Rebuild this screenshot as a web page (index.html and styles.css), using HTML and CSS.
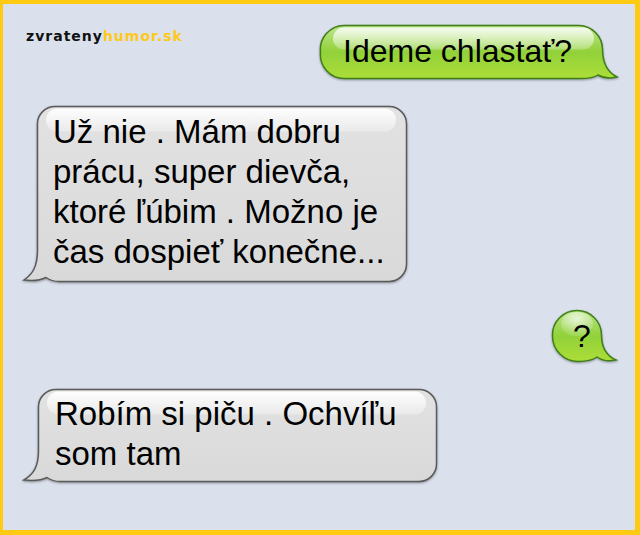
FILE: index.html
```html
<!DOCTYPE html>
<html lang="sk">
<head>
<meta charset="utf-8">
<title>zvratenyhumor.sk</title>
<link rel="stylesheet" href="styles.css">
</head>
<body>
<div class="frame">
  <div class="top">
    <div class="logo"><span class="logo-a">zvrateny</span><span class="logo-b">humor.sk</span></div>
    <div class="bubble green b1">
      <svg class="shape" width="283" height="54" viewBox="0 0 283 54">
        <defs>
          <linearGradient id="gg1" x1="0" y1="0" x2="0" y2="1">
            <stop offset="0" stop-color="#bde68c"/>
            <stop offset="0.5" stop-color="#92d13a"/>
            <stop offset="1" stop-color="#acde38"/>
          </linearGradient>
          <linearGradient id="gl1" x1="0" y1="0" x2="0" y2="1">
            <stop offset="0" stop-color="#ffffff" stop-opacity="0.85"/>
            <stop offset="1" stop-color="#ffffff" stop-opacity="0.25"/>
          </linearGradient>
        </defs>
        <path d="M24,0.5 H259 A24,24 0 0 1 282.5,24 C282.5,38 287,47 297,52 C290,53.5 283,53 278,50 C274,53 268,53.5 260,53.5 H24 A24,24 0 0 1 0.5,27 A24,24 0 0 1 24,0.5 Z" fill="url(#gg1)" stroke="#3f7f17" stroke-width="1.5"/>
        <rect x="13" y="2.5" width="261" height="22" rx="11" fill="url(#gl1)"/>
      </svg>
      <span class="txt">Ideme chlastať?</span>
    </div>
  </div>

  <div class="bubble gray g1">
    <svg class="shape" width="370" height="176" viewBox="0 0 370 176">
      <defs>
        <linearGradient id="gy1" x1="0" y1="0" x2="0" y2="1">
          <stop offset="0" stop-color="#e2e2e2"/>
          <stop offset="1" stop-color="#d9d9d9"/>
        </linearGradient>
        <linearGradient id="gh1" x1="0" y1="0" x2="0" y2="1">
          <stop offset="0" stop-color="#ffffff" stop-opacity="0.95"/>
          <stop offset="1" stop-color="#ffffff" stop-opacity="0.3"/>
        </linearGradient>
      </defs>
      <path d="M18,0.5 H352 A17.5,17.5 0 0 1 369.5,18 V158 A17.5,17.5 0 0 1 352,175.5 H22 C16,175.5 12,173.5 9,171.5 C4,174 -5,175 -13,174 C-4,168 0.5,160 0.5,144 V18 A17.5,17.5 0 0 1 18,0.5 Z" fill="url(#gy1)" stroke="#5a5a5a" stroke-width="1.5"/>
      <rect x="9" y="2.5" width="350" height="23" rx="11.5" fill="url(#gh1)"/>
    </svg>
    <span class="txt">Už nie . Mám dobru<br>prácu, super dievča,<br>ktoré ľúbim . Možno je<br>čas dospieť konečne...</span>
  </div>

  <div class="bubble green q">
    <svg class="shape" width="50" height="52" viewBox="0 0 50 52">
      <defs>
        <linearGradient id="gg2" x1="0" y1="0" x2="0" y2="1">
          <stop offset="0" stop-color="#b9e488"/>
          <stop offset="0.5" stop-color="#92d13a"/>
          <stop offset="1" stop-color="#acde38"/>
        </linearGradient>
        <radialGradient id="gl2" cx="0.5" cy="0.3" r="0.6">
          <stop offset="0" stop-color="#ffffff" stop-opacity="0.7"/>
          <stop offset="1" stop-color="#ffffff" stop-opacity="0.15"/>
        </radialGradient>
      </defs>
      <path d="M25,0.5 A24.5,24.5 0 0 1 49.5,25 C49.5,37 55,46 64,50 C57,51.5 50,50.5 45,47 C40,50.5 33,51.5 26,51.5 A25.5,25.5 0 0 1 0.5,26 A24.5,24.5 0 0 1 25,0.5 Z" fill="url(#gg2)" stroke="#3f7f17" stroke-width="1.5"/>
      <ellipse cx="25" cy="14" rx="16" ry="12" fill="url(#gl2)"/>
    </svg>
    <span class="txt">?</span>
  </div>

  <div class="bubble gray g2">
    <svg class="shape" width="399" height="93" viewBox="0 0 399 93">
      <defs>
        <linearGradient id="gy2" x1="0" y1="0" x2="0" y2="1">
          <stop offset="0" stop-color="#e2e2e2"/>
          <stop offset="1" stop-color="#d9d9d9"/>
        </linearGradient>
        <linearGradient id="gh2" x1="0" y1="0" x2="0" y2="1">
          <stop offset="0" stop-color="#ffffff" stop-opacity="0.95"/>
          <stop offset="1" stop-color="#ffffff" stop-opacity="0.3"/>
        </linearGradient>
      </defs>
      <path d="M18,0.5 H381 A17.5,17.5 0 0 1 398.5,18 V75 A17.5,17.5 0 0 1 381,92.5 H22 C16,92.5 12,90.5 9,88.5 C4,91 -5,92 -14,91 C-4,85 0.5,77 0.5,62 V18 A17.5,17.5 0 0 1 18,0.5 Z" fill="url(#gy2)" stroke="#5a5a5a" stroke-width="1.5"/>
      <rect x="9" y="2.5" width="379" height="23" rx="11.5" fill="url(#gh2)"/>
    </svg>
    <span class="txt">Robím si piču . Ochvíľu<br>som tam</span>
  </div>
</div>
</body>
</html>
```

FILE: styles.css
```css
html, body {
  margin: 0;
  padding: 0;
  background: #dae0ec;
}

.frame {
  box-sizing: border-box;
  width: 640px;
  height: 535px;
  border-style: solid;
  border-color: #ffca12;
  border-width: 4px 5px 5px 3px;
  background: #dae0ec;
  display: flex;
  flex-direction: column;
  overflow: hidden;
}

.top {
  display: flex;
  justify-content: space-between;
  align-items: flex-start;
  padding-top: 21px;
}

.logo {
  margin-left: 23px;
  margin-top: 2px;
  font-family: "DejaVu Sans", Verdana, sans-serif;
  font-weight: 700;
  font-size: 14px;
  line-height: 18px;
  letter-spacing: 1px;
}

.logo-a { color: #111111; }
.logo-b { color: #ffc91a; }

.bubble {
  position: relative;
  box-sizing: border-box;
  font-family: "Liberation Sans", Arial, sans-serif;
  font-size: 32px;
  line-height: 40px;
  color: #000000;
  flex: none;
}

.gray {
  font-size: 33px;
}

.shape {
  position: absolute;
  left: 0;
  top: 0;
  overflow: visible;
  filter: drop-shadow(0 1px 1px rgba(0, 0, 0, 0.35));
}

.txt {
  position: relative;
  display: block;
  white-space: nowrap;
}

.b1 {
  width: 283px;
  height: 54px;
  margin-right: 32px;
  padding: 6px 0 0 23px;
}

.g1 {
  width: 370px;
  height: 176px;
  margin-top: 27px;
  margin-left: 34px;
  padding: 6px 0 0 16px;
}

.q {
  align-self: flex-end;
  width: 50px;
  height: 52px;
  margin-top: 28px;
  margin-right: 33px;
  padding: 6px 0 0 21px;
}

.g2 {
  width: 399px;
  height: 93px;
  margin-top: 27px;
  margin-left: 35px;
  padding: 5px 0 0 17px;
}
```
